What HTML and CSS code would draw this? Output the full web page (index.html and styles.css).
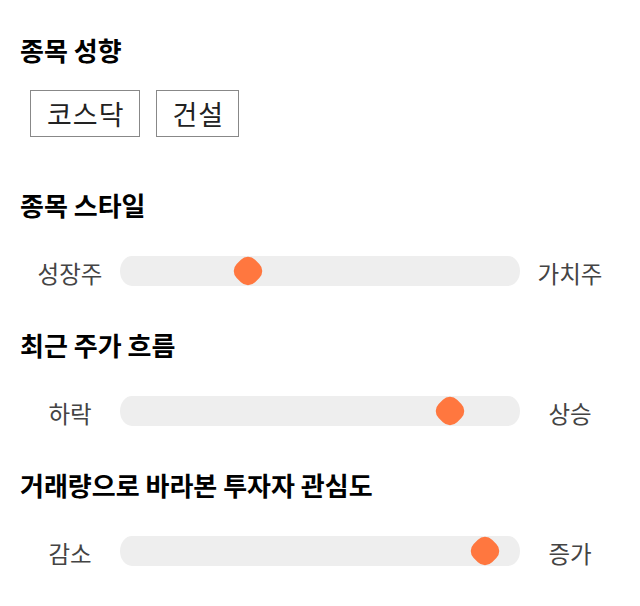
FILE: index.html
```html
<!DOCTYPE html>
<html>
<head>
  <meta http-equiv="Content-type" content="text/html; charset=utf-8">
  <title>종목 성향</title>
<link rel="stylesheet" href="styles.css">
</head>

<body>
  <div class="page">
    <section class="group">
      <h2 class="title">종목 성향</h2>
      <div class="tags">
        <span class="tag">코스닥</span>
        <span class="tag">건설</span>
      </div>
    </section>

    <section class="group">
      <h2 class="title">종목 스타일</h2>
      <div class="scale">
        <span class="end">성장주</span>
        <div class="track"><span class="knob" style="left:32%"></span></div>
        <span class="end">가치주</span>
      </div>
    </section>

    <section class="group">
      <h2 class="title">최근 주가 흐름</h2>
      <div class="scale">
        <span class="end">하락</span>
        <div class="track"><span class="knob" style="left:82.5%"></span></div>
        <span class="end">상승</span>
      </div>
    </section>

    <section class="group">
      <h2 class="title">거래량으로 바라본 투자자 관심도</h2>
      <div class="scale">
        <span class="end">감소</span>
        <div class="track"><span class="knob" style="left:91.25%"></span></div>
        <span class="end">증가</span>
      </div>
    </section>
  </div>
</body>
</html>
```

FILE: styles.css
```css
body {
  margin: 0;
  background: #fff;
  font-family: "Noto Sans CJK KR", "Noto Sans", sans-serif;
}
.page {
  padding: 32px 20px 0 20px;
  display: flex;
  flex-direction: column;
  gap: 39px;
}
.group {
  display: flex;
  flex-direction: column;
  gap: 31px;
}
.group:first-child {
  gap: 22px;
}
.group:nth-child(2) {
  margin-top: 11px;
}
.title {
  margin: 0;
  font-size: 26px;
  line-height: 36px;
  font-weight: bold;
  color: #000;
}
.tags {
  display: flex;
  gap: 16px;
  padding-left: 10px;
}
.tag {
  border: 1px solid #888;
  padding: 8px 14px 7px 16px;
  font-size: 27px;
  letter-spacing: 1px;
  line-height: 30px;
  color: #222;
}
.scale {
  display: flex;
  align-items: center;
}
.end {
  width: 100px;
  text-align: center;
  font-size: 23.5px;
  line-height: 30px;
  color: #444;
  padding-top: 4px;
}
.track {
  position: relative;
  width: 400px;
  height: 30px;
  background: #eee;
  border-radius: 12px / 15px;
}
.knob {
  position: absolute;
  top: 2px;
  width: 26px;
  height: 26px;
  margin-left: -13px;
  background: #ff773f;
  border-radius: 10px;
  transform: rotate(45deg);
}
```
